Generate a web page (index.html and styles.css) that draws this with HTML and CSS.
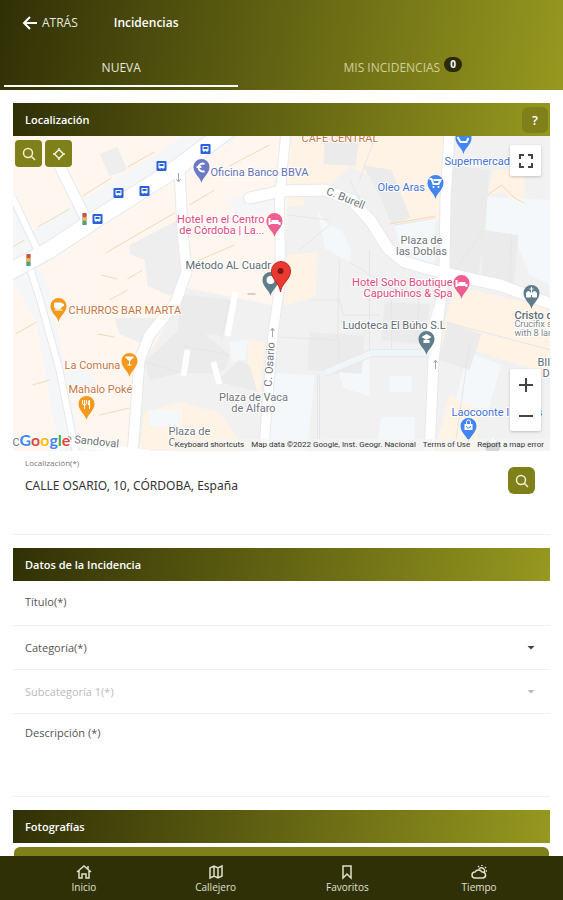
FILE: index.html
```html
<!DOCTYPE html>
<html lang="es">
<head>
  <meta charset="UTF-8">
  <meta name="viewport" content="width=device-width, initial-scale=1.0">
  <title>Incidencias</title>
  <link rel="stylesheet" href="styles.css">
</head>
<body>
  <header class="header">
    <div class="toolbar">
      <a class="back" href="#">
        <svg width="16" height="16" viewBox="0 0 16 16" fill="none" stroke="currentColor" stroke-width="2"><path d="M15 8H2M8 2L2 8l6 6"/></svg>
        ATRÁS
      </a>
      <h1>Incidencias</h1>
    </div>
    <nav class="tabs">
      <a class="tab active" href="#nueva">NUEVA</a>
      <a class="tab" href="#mis">MIS INCIDENCIAS <span class="badge">0</span></a>
    </nav>
  </header>

  <main class="content">
    <!-- Localización -->
    <section class="section">
      <div class="section-bar">
        <h2>Localización</h2>
        <button class="help" type="button" aria-label="Ayuda">?</button>
      </div>

      <div class="map">
        <svg class="map-canvas" viewBox="13 136 538 315" preserveAspectRatio="xMidYMid slice">
          <defs>
            <path id="pin" d="M0 12C-1 6-8 3-8-4a8 8 0 0 1 16 0C8 3 1 6 0 12z"/>
            <g id="bus">
              <rect x="-5" y="-5" width="10" height="10" rx="1" fill="#2962d9"/>
              <path d="M-3-3h6v5h-1v1h-1v-1h-2v1h-1v-1h-1z" fill="#fff"/>
              <path d="M-2-2h4v2h-4z" fill="#2962d9"/>
            </g>
            <g id="light">
              <rect x="-2" y="-6" width="4" height="12" fill="#777"/>
              <circle cy="-4" r="2" fill="#e04a3a"/><circle r="2" fill="#f2b84b"/><circle cy="4" r="2" fill="#3fae7c"/>
            </g>
          </defs>

          <rect x="13" y="136" width="538" height="315" fill="#fff7ef"/>

          <!-- manzanas -->
          <g fill="#f4f6f8">
            <path d="M13 242L75 205 170 145 182 136H240L172 182 100 228 13 282z"/>
            <path d="M13 195L35 248 50 290 82 451H60L36 320 13 280z"/>
            <path d="M228 200L280 186V208L236 222z"/>
            <path d="M58 376L84 368 100 385 84 392z"/>
          </g>
          <path d="M130 245L179 220 183 285 170 296 148 286 145 260 130 254z" fill="#eee"/>
          <path d="M100 154L118 147 128 170 110 176z" fill="#eee"/>
          <path d="M115 318L158 318 148 346 120 334z" fill="#eee"/>
          <path d="M188 288L272 305 262 451H138L145 362z" fill="#f1f1f1"/>
          <path d="M325 136H551V451H266L284 295 288 197 325 190z" fill="#f1f1f1"/>
          <path d="M290 136H392V178L350 166 330 185H290zM392 136H445V220L398 224 378 180 350 166zM494 170H525V200L512 204 506 192 488 195z" fill="#fff3e5"/>
          <path d="M288 195H304V206H288zM288 255L318 252 316 296 284 306z" fill="#fff3e5"/>
          <path d="M455 286L551 308V374L440 340zM450 395L480 402 478 451H435z" fill="#fff3e5"/>
          <path d="M145 412L182 402 220 413 248 450H140zM248 340L265 342 261 395 248 390z" fill="#fff3e5"/>
          <g fill="#f4f8fa">
            <path d="M468 352L502 365 488 412 456 400zM270 373L315 375 308 451H265zM488 197L551 200V285L530 275 515 238 480 228z"/>
            <path d="M318 210L328 224 342 230 352 250 350 262 325 248zM395 226L436 218 435 272 405 262zM390 376H412V392H390zM382 417H415V440H378z"/>
            <path d="M230 342L248 340 246 360 232 362zM150 410H180V426H150zM336 362L370 358V396L344 388z"/>
          </g>
          <g fill="#ebebeb">
            <path d="M325 136L360 138 356 166 324 164zM363 165L392 170 411 218 392 224 378 190zM452 165L490 170 485 240 478 280 450 270zM448 322L482 334 470 370 440 360z"/>
            <path d="M145 362L190 320 230 355 225 370 185 372 150 380zM220 378L240 360 250 365 258 392 220 382zM484 230L519 235 514 290 482 278z"/>
            <path d="M182 294L230 300 222 336 178 330zM310 332L365 336 362 374 308 370zM385 302L430 304 426 345 382 340z"/>
          </g>

          <!-- lindes de parcelas -->
          <g fill="none" stroke="#e6e6e6">
            <path d="M145 362L180 372H222M184 346L230 355M230 300L222 340M278 337L340 340 338 374M340 260L338 340M370 250V350M318 373V451M392 300V350M446 322L551 350M350 180L382 240M452 275L484 230M512 237L510 290M376 136L360 180M395 225L436 218M420 280L418 340M310 300H340L344 315H380M320 375V440L400 450M470 345L455 450M288 215L330 220M330 225L300 250M350 262L395 290"/>
          </g>
          <g fill="none" stroke="#f4d8b8">
            <path d="M83 196L112 178M128 167L155 152M38 227L70 209M106 253L175 213M13 247L25 240M102 275L118 279M128 279L143 270M16 334L37 322M98 334L115 337M33 385L50 380M100 415L130 408M230 166L270 145M190 205L215 190M200 260L235 245M488 195L502 185 515 198 525 203M390 224L436 216M110 300L128 290"/>
          </g>

          <!-- calles: borde gris y calzada blanca -->
          <g fill="none" stroke="#e6e9ec" stroke-linejoin="round">
            <path d="M8 273L50 250 100 217 173 171 215 140 235 125" stroke-width="18"/>
            <path d="M57 160L88 222M180 168L183 232 187 272 176 303 150 335 140 360 133 455" stroke-width="12"/>
            <path d="M13 197L37 248M31 270L40 298 60 370 76 451" stroke-width="8"/>
            <path d="M286 136L280 200 281 280 274 330 268 400 264 455" stroke-width="11"/>
            <path d="M250 198L282 191 325 190 352 200 372 222 388 248 405 262 440 272 500 285 555 305" stroke-width="13" stroke-linecap="round"/>
            <path d="M450 132L446 200 445 270 440 310 434 360 430 455" stroke-width="12"/>
            <path d="M325 373L372 353H432" stroke-width="8"/>
          </g>
          <g fill="none" stroke="#fff" stroke-linejoin="round">
            <path d="M8 273L50 250 100 217 173 171 215 140 235 125" stroke-width="16"/>
            <path d="M57 160L88 222M180 168L183 232 187 272 176 303 150 335 140 360 133 455" stroke-width="10"/>
            <path d="M13 197L37 248M31 270L40 298 60 370 76 451" stroke-width="6"/>
            <path d="M286 136L280 200 281 280 274 330 268 400 264 455" stroke-width="9"/>
            <path d="M250 198L282 191 325 190 352 200 372 222 388 248 405 262 440 272 500 285 555 305" stroke-width="11" stroke-linecap="round"/>
            <path d="M450 132L446 200 445 270 440 310 434 360 430 455" stroke-width="10"/>
            <path d="M10 440L75 444 150 453M236 292L228 336M214 362L220 384M440 300L425 352M188 350L184 376" stroke-width="6"/>
          </g>
          <path d="M325 373L372 353H432" fill="none" stroke="#f1f5f7" stroke-width="6"/>
          <path d="M179 182v-9M177 179l2 3 2-3M273 337v-9M271 331l2-3 2 3M436 369v-9M434 363l2-3 2 3M248 294h8" fill="none" stroke="#a5abb2"/>

          <!-- transporte -->
          <use href="#bus" x="206" y="149"/>
          <use href="#bus" x="162" y="166"/>
          <use href="#bus" x="119" y="193"/>
          <use href="#bus" x="145" y="191"/>
          <use href="#bus" x="98" y="219"/>
          <use href="#light" x="85" y="219"/>
          <use href="#light" x="29" y="260"/>

          <!-- rótulos -->
          <g class="label">
            <g fill="#c9743c">
              <text x="302" y="142">CAFÉ CENTRAL</text>
              <text x="69" y="314">CHURROS BAR MARTA</text>
              <text x="65" y="369">La Comuna</text>
              <text x="69" y="393">Mahalo Poké</text>
            </g>
            <text x="211" y="176" fill="#6470b8">Oficina Banco BBVA</text>
            <g fill="#e0487f">
              <text x="265" y="223" text-anchor="end">Hotel en el Centro</text>
              <text x="265" y="234" text-anchor="end">de Córdoba | La...</text>
              <text x="453" y="286" text-anchor="end">Hotel Soho Boutique</text>
              <text x="453" y="297" text-anchor="end">Capuchinos &amp; Spa</text>
            </g>
            <g fill="#4272d8">
              <text x="445" y="165">Supermercad</text>
              <text x="378" y="191">Oleo Aras</text>
              <text x="452" y="416">Laocoonte Inmues</text>
            </g>
            <g fill="#5e6b73">
              <text x="186" y="269">Método AL Cuadr</text>
              <text x="343" y="329">Ludoteca El Búho S.L</text>
              <text x="515" y="319" font-weight="500">Cristo d</text>
              <text x="538" y="366">BII</text>
              <text x="543" y="377">D</text>
            </g>
            <g fill="#6f7479">
              <text x="422" y="244" text-anchor="middle">Plaza de</text>
              <text x="422" y="255" text-anchor="middle">las Doblas</text>
              <text x="254" y="401" text-anchor="middle">Plaza de Vaca</text>
              <text x="254" y="412" text-anchor="middle">de Alfaro</text>
              <text x="169" y="435">Plaza de</text>
              <text x="169" y="446">C</text>
              <text x="13" y="446">C</text>
              <text transform="translate(66 442) rotate(6)">e Sandoval</text>
              <text transform="translate(326 194) rotate(22)">C. Burell</text>
              <text transform="translate(272 387) rotate(-86)">C. Osario</text>
            </g>
            <g class="label-small" fill="#7d858b">
              <text x="515" y="327">Crucifix s</text>
              <text x="515" y="336">with 8 lan</text>
            </g>
          </g>

          <!-- puntos de interés -->
          <use href="#pin" x="202" y="171" fill="#6b78c4"/>
          <path d="M205 164a4 4 0 1 0 0 7M197 167h5" fill="none" stroke="#fff" stroke-width="2"/>
          <use href="#pin" x="275" y="225" fill="#ee5e92"/>
          <path d="M270 218v7M270 223h10v2M272 221h7" fill="none" stroke="#fff" stroke-width="2"/>
          <use href="#pin" x="462" y="287" fill="#ee5e92"/>
          <path d="M457 280v7M457 285h10v2M459 283h7" fill="none" stroke="#fff" stroke-width="2"/>
          <use href="#pin" x="464" y="142" fill="#4285f4"/>
          <path d="M458 137l3 5h6l2-4" fill="none" stroke="#fff" stroke-width="2"/>
          <use href="#pin" x="436" y="187" fill="#4285f4"/>
          <path d="M430 179h2l2 5h5l2-4h-7" fill="none" stroke="#fff" stroke-width="2"/>
          <circle cx="434" cy="187" r="1" fill="#fff"/><circle cx="439" cy="187" r="1" fill="#fff"/>
          <use href="#pin" x="469" y="430" fill="#4285f4"/>
          <path d="M465 424h8v6h-8z" fill="#fff"/>
          <path d="M467 424v-2a2 2 0 0 1 4 0v2" fill="none" stroke="#fff"/>
          <path d="M467 426a2 2 0 0 0 4 0" fill="none" stroke="#4285f4"/>
          <use href="#pin" x="59" y="310" fill="#f39a1e"/>
          <path d="M55 303h7v4a3 3 0 0 1-3 2h-1a3 3 0 0 1-3-2zM62 304h2v2h-2M55 310h8" fill="#fff" stroke="#fff"/>
          <use href="#pin" x="130" y="365" fill="#f39a1e"/>
          <path d="M126 357h8l-4 4zM130 361v4M128 365h4" fill="#fff" stroke="#fff"/>
          <use href="#pin" x="87" y="408" fill="#f39a1e"/>
          <path d="M83 400v3a1 1 0 0 0 4 0v-3M85 400v9M90 409v-9q-2 2-1 5" fill="none" stroke="#fff"/>
          <use href="#pin" x="271" y="284" fill="#607d8b"/>
          <circle cx="271" cy="280" r="4" fill="#fff"/>
          <use href="#pin" x="427" y="343" fill="#607d8b"/>
          <path d="M422 337l5-3 5 3-5 3zM424 340h6v3h-6z" fill="#fff"/>
          <use href="#pin" x="532" y="297" fill="#607d8b"/>
          <path d="M527 297v-4l2-2 2 2v4zM533 297v-4l2-2 2 2v4zM532 287v8M530 289h4" fill="#fff" stroke="#fff"/>
          <path d="M485 447a8 8 0 0 1 16 0l-2 4h-12z" fill="#7d929c"/>
          <path d="M488 441l5-3 5 3-5 3z" fill="#fff"/>

          <!-- marcador de la incidencia -->
          <path d="M281 292c-1-9-9-12-9-21a9 9 0 0 1 19 0c0 9-9 12-10 21z" fill="#ea3a30" stroke="#c5221f"/>
          <circle cx="281" cy="271" r="3" fill="#7a1712"/>

          <text class="google" x="20" y="446"><tspan fill="#4285f4">G</tspan><tspan fill="#ea4335">o</tspan><tspan fill="#fbbc04">o</tspan><tspan fill="#4285f4">g</tspan><tspan fill="#34a853">l</tspan><tspan fill="#ea4335">e</tspan></text>
        </svg>

        <div class="map-tools">
          <button class="icon-button" type="button" aria-label="Buscar en el mapa">
            <svg width="14" height="14" viewBox="0 0 14 14" fill="none" stroke="currentColor" stroke-width="1.5"><circle cx="6" cy="6" r="4.5"/><path d="M9 9l4 4"/></svg>
          </button>
          <button class="icon-button" type="button" aria-label="Mi posición">
            <svg width="14" height="14" viewBox="0 0 14 14" fill="none" stroke="currentColor" stroke-width="1.5"><path d="M7 2.5L11.500 7 7 11.500 2.500 7zM7 1v2M7 11v2M1 7h2M11 7h2"/></svg>
          </button>
        </div>
        <button class="map-control fullscreen" type="button" aria-label="Pantalla completa">
          <svg width="16" height="16" viewBox="0 0 16 16" fill="none" stroke="currentColor" stroke-width="2"><path d="M2 6V2h4M10 2h4v4M14 10v4h-4M6 14H2v-4"/></svg>
        </button>
        <div class="map-control zoom">
          <button type="button" aria-label="Acercar">
            <svg width="14" height="14" viewBox="0 0 14 14" stroke="currentColor" stroke-width="2"><path d="M0 7h14M7 0v14"/></svg>
          </button>
          <button type="button" aria-label="Alejar">
            <svg width="14" height="14" viewBox="0 0 14 14" stroke="currentColor" stroke-width="2"><path d="M0 7h14"/></svg>
          </button>
        </div>
        <div class="map-legal">
          <button type="button">Keyboard shortcuts</button>
          <span>Map data ©2022 Google, Inst. Geogr. Nacional</span>
          <a href="#">Terms of Use</a>
          <a href="#">Report a map error</a>
        </div>
      </div>

      <div class="field location">
        <div class="location-text">
          <label for="localizacion">Localización(*)</label>
          <input type="text" id="localizacion" value="CALLE OSARIO, 10, CÓRDOBA, España">
        </div>
        <button class="icon-button" type="button" aria-label="Buscar dirección">
          <svg width="14" height="14" viewBox="0 0 14 14" fill="none" stroke="currentColor" stroke-width="1.5"><circle cx="6" cy="6" r="4.5"/><path d="M9 9l4 4"/></svg>
        </button>
      </div>
    </section>

    <!-- Datos de la incidencia -->
    <section class="section">
      <div class="section-bar">
        <h2>Datos de la Incidencia</h2>
      </div>
      <div class="field title-field">
        <label for="titulo">Título(*)</label>
        <input type="text" id="titulo">
      </div>
      <div class="field select-field">
        <label for="categoria">Categoría(*)</label>
        <select id="categoria"><option value=""></option></select>
      </div>
      <div class="field select-field disabled">
        <label for="subcategoria">Subcategoría 1(*)</label>
        <select id="subcategoria" disabled><option value=""></option></select>
      </div>
      <div class="field description">
        <label for="descripcion">Descripción (*)</label>
        <textarea id="descripcion"></textarea>
      </div>
    </section>

    <!-- Fotografías -->
    <section class="section">
      <div class="section-bar">
        <h2>Fotografías</h2>
      </div>
      <button class="photo-button" type="button" aria-label="Añadir fotografía"></button>
    </section>
  </main>

  <nav class="bottom-nav">
    <a href="#">
      <svg width="16" height="16" viewBox="0 0 16 16" fill="none" stroke="currentColor" stroke-width="1.5"><path d="M1 8l7-6 7 6M3 7v7h3v-4h4v4h3V7M12 5V2"/></svg>
      Inicio
    </a>
    <a href="#">
      <svg width="16" height="16" viewBox="0 0 16 16" fill="none" stroke="currentColor" stroke-width="1.5"><path d="M2 4l4-2 4 2 4-2v10l-4 2-4-2-4 2zM6 2v10M10 4v10"/></svg>
      Callejero
    </a>
    <a href="#">
      <svg width="16" height="16" viewBox="0 0 16 16" fill="none" stroke="currentColor" stroke-width="1.5"><path d="M4 2h8v12l-4-4-4 4z"/></svg>
      Favoritos
    </a>
    <a href="#">
      <svg width="16" height="16" viewBox="0 0 16 16" fill="none" stroke="currentColor" stroke-width="1.5"><path d="M4 14a3 3 0 0 1 0-6 4 4 0 0 1 7 0 3 3 0 0 1 1 6zM8 5a3 3 0 1 1 5 4M11 1v1M15 3l-1 1M7 2l1 1M15 7h1"/></svg>
      Tiempo
    </a>
  </nav>
</body>
</html>
```
FILE: styles.css
```css
* {
  box-sizing: border-box;
}

body {
  display: flex;
  flex-direction: column;
  height: 100vh;
  margin: 0;
  background: #fff;
  color: #555;
  font-family: 'Open Sans', 'Noto Sans', sans-serif;
  font-size: 11px;
}

h1, h2 {
  margin: 0;
  font-size: 11px;
  font-weight: 600;
}

a {
  color: inherit;
  text-decoration: none;
}

button, input, select, textarea {
  margin: 0;
  padding: 0;
  border: none;
  background: none;
  color: inherit;
  font: inherit;
}

button {
  cursor: pointer;
}

.header, .section-bar {
  background: linear-gradient(100deg, #303006, #96981f);
  color: #fff;
}

.header, .header h1 {
  font-size: 12px;
}

.toolbar {
  display: flex;
  align-items: center;
  gap: 36px;
  height: 45px;
  padding: 0 22px;
}

.back {
  display: flex;
  align-items: center;
  gap: 4px;
  color: #e8e8dc;
}

.back svg {
  color: #fff;
}

.tabs {
  display: grid;
  grid-template-columns: 3fr 4fr;
  gap: 8px;
  height: 45px;
  padding: 0 4px 3px;
}

.tab {
  display: flex;
  align-items: center;
  justify-content: center;
  gap: 4px;
  padding-top: 4px;
  border-bottom: 2px solid transparent;
  color: #d0d09a;
}

.tab.active {
  border-color: #fff;
  color: #e8e8dc;
}

.badge {
  padding: 0 6px;
  margin-bottom: 6px;
  border-radius: 8px;
  background: #2b2b08;
  color: #fff;
  font-size: 10px;
  font-weight: bold;
  line-height: 15px;
}

.content {
  flex: 1;
  min-height: 0;
  padding: 13px;
  overflow-y: auto;
  scrollbar-width: none;
}

.section {
  margin-bottom: 13px;
}

.section-bar {
  display: flex;
  align-items: center;
  justify-content: space-between;
  height: 33px;
  padding: 0 2px 0 12px;
}

.help {
  width: 26px;
  height: 26px;
  border-radius: 6px;
  background: #80801a;
  font-size: 13px;
  font-weight: 600;
}

.icon-button {
  display: flex;
  align-items: center;
  justify-content: center;
  width: 27px;
  height: 27px;
  border-radius: 4px;
  background: #80801a;
  color: #f2f2dc;
}

/* mapa */
.map {
  position: relative;
  height: 315px;
  overflow: hidden;
}

.map-canvas {
  display: block;
  width: 100%;
  height: 100%;
}

.label {
  font-family: Roboto, sans-serif;
  font-size: 11px;
  paint-order: stroke;
  stroke: #fff;
  stroke-width: 2px;
}

.label-small {
  font-size: 9px;
}

.google {
  font-family: Lato, sans-serif;
  font-size: 16px;
  font-weight: bold;
  paint-order: stroke;
  stroke: #fff;
  stroke-width: 2px;
}

.map-tools {
  position: absolute;
  top: 4px;
  left: 2px;
  display: flex;
  gap: 3px;
}

.map-control {
  position: absolute;
  right: 9px;
  width: 31px;
  border-radius: 2px;
  background: #fff;
  color: #444;
  box-shadow: 0 1px 3px rgba(0, 0, 0, 0.2);
}

.map-control.fullscreen {
  top: 9px;
  display: flex;
  align-items: center;
  justify-content: center;
  height: 31px;
}

.map-control.zoom {
  bottom: 20px;
}

.zoom button {
  display: flex;
  align-items: center;
  justify-content: center;
  width: 100%;
  height: 31px;
}

.map-legal {
  position: absolute;
  right: 0;
  bottom: 0;
  display: flex;
  gap: 7px;
  padding: 0 6px 0 2px;
  background: rgba(245, 245, 245, 0.7);
  color: #333;
  font-family: Roboto, sans-serif;
  font-size: 8px;
  line-height: 12px;
  white-space: nowrap;
}

/* formulario */
.field {
  display: flex;
  align-items: center;
  gap: 8px;
  height: 44px;
  padding: 0 12px;
  border-bottom: 1px solid #f0f0f0;
}

.field input, .field select, .field textarea {
  flex: 1;
  min-width: 0;
  outline: none;
}

.field select {
  appearance: none;
}

.location {
  align-items: flex-start;
  height: 84px;
  padding: 6px 15px 0 12px;
}

.location-text {
  display: flex;
  flex: 1;
  flex-direction: column;
  color: #333;
}

.location label {
  color: #777;
  font-size: 8px;
  line-height: 12px;
}

.location input {
  flex: none;
  height: 32px;
  font-family: 'Noto Sans', sans-serif;
  font-size: 12px;
}

.location .icon-button {
  margin-top: 10px;
  border-radius: 6px;
}

.title-field {
  height: 45px;
  padding-bottom: 4px;
}

.select-field::after {
  content: '';
  width: 8px;
  height: 4px;
  margin-right: 3px;
  background: #444;
  clip-path: polygon(0 0, 100% 0, 50% 100%);
}

.disabled {
  color: #bbb;
}

.disabled::after {
  background: #bbb;
}

.description {
  align-items: flex-start;
  height: 83px;
  padding-top: 11px;
}

.description textarea {
  height: 60px;
  resize: none;
}

.photo-button {
  display: block;
  width: calc(100% - 2px);
  height: 34px;
  margin: 4px auto 0;
  border-radius: 6px;
  background: #80801a;
}

/* menú inferior */
.bottom-nav {
  display: grid;
  grid-template-columns: repeat(4, 1fr);
  height: 44px;
  padding: 0 18px;
  background: #303006;
  color: #e0e0d0;
  font-size: 10px;
  line-height: 12px;
}

.bottom-nav a {
  display: flex;
  flex-direction: column;
  align-items: center;
  justify-content: center;
  gap: 1px;
}
```
